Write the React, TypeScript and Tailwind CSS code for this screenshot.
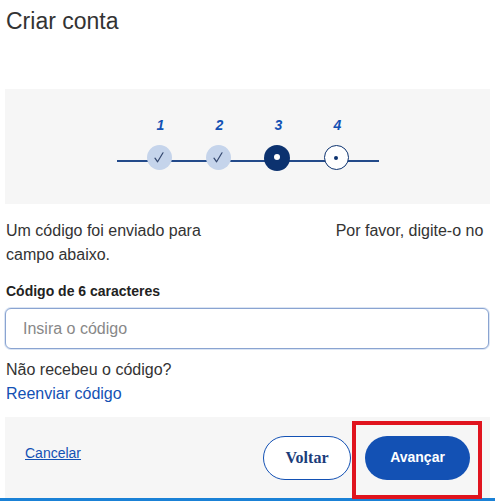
const steps = [
  { n: "1", state: "done" },
  { n: "2", state: "done" },
  { n: "3", state: "current" },
  { n: "4", state: "next" },
]

const Check = () => (
  <svg width="10" height="11" viewBox="0 0 10 11" fill="none">
    <path d="M1 6.2 L3.6 9.8 L9 0.8" stroke="#33476e" strokeWidth="1.2" strokeLinecap="round" strokeLinejoin="round" />
  </svg>
)

const StepCircle = ({ state }: { state: string }) => {
  if (state === "done") {
    return (
      <div className="w-[25px] h-[25px] rounded-full bg-[#c5d4eb] flex items-center justify-center">
        <Check />
      </div>
    )
  }
  if (state === "current") {
    return (
      <div className="w-[26px] h-[26px] rounded-full bg-[#0c326f] flex items-center justify-center">
        <div className="w-[6px] h-[6px] rounded-full bg-white -mt-[2px]" />
      </div>
    )
  }
  return (
    <div className="w-[25px] h-[25px] rounded-full bg-white border border-[#0c326f] flex items-center justify-center">
      <div className="w-[4px] h-[4px] rounded-full bg-[#0c326f]" />
    </div>
  )
}

export default function App() {
  return (
    <div className="w-[495px] h-[501px] bg-white text-[#333] font-['Liberation_Sans',Arial,sans-serif] overflow-hidden">
      <h1 className="pt-[7px] pl-[6px] text-[23px] leading-[28px] font-normal text-[#333]">Criar conta</h1>

      <div className="mt-[54px] mx-[5px] bg-[#f6f6f6] pt-[26px] pb-[33px]">
        <div className="relative w-[262px] mx-auto px-[13px]">
          <div className="absolute left-0 right-0 top-[45px] h-[2px] bg-[#234a8a]" />
          <div className="relative flex">
            {steps.map((s) => (
              <div key={s.n} className="w-[59px] flex flex-col items-center gap-[10px]">
                <span className="text-[14px] leading-[20px] font-bold italic text-[#1351b4] pl-[3px]">{s.n}</span>
                <StepCircle state={s.state} />
              </div>
            ))}
          </div>
        </div>
      </div>

      <div className="px-[6px] pt-[15px]">
        <p className="text-[16px] leading-[24px] pr-[4px]">
          Um código foi enviado para <span className="inline-block w-[126px]" /> Por favor, digite-o no campo abaixo.
        </p>
        <label className="block mt-[15px] text-[14px] leading-[18px] font-bold text-[#222]">Código de 6 caracteres</label>
      </div>

      <div className="mx-[5px] mt-[8px]">
        <input
          placeholder="Insira o código"
          className="w-[484px] h-[41px] rounded-[6px] border border-[#8aa4d1] shadow-[0_0_0_1px_#dbe5f4] pl-[17px] text-[16px] placeholder:text-[#888] outline-none bg-white"
        />
      </div>

      <div className="px-[6px] pt-[9px] text-[16px] leading-[24px]">
        <p>Não recebeu o código?</p>
        <a className="text-[#1351b4]">Reenviar código</a>
      </div>

      <div className="relative mt-[11px]">
        <div className="mx-[5px] w-[485px] h-[81px] bg-[#f6f6f6] flex items-center pl-[20px] pr-[20px]">
          <a className="text-[14px] text-[#1351b4] underline -mt-[8px]">Cancelar</a>
          <div className="ml-auto flex items-center gap-[14px]">
            <button className="w-[88px] h-[44px] rounded-full border border-[#1351b4] bg-white font-['Liberation_Serif',serif] font-bold text-[16px] text-[#1b3d7a]">
              Voltar
            </button>
            <button className="w-[105px] h-[44px] rounded-full bg-[#1351b4] text-white font-bold text-[14px]">
              Avançar
            </button>
          </div>
        </div>
        <div className="h-[4px] bg-[#1a81d6]" />
        <div className="absolute left-[352px] top-[4px] w-[130px] h-[78px] border-4 border-[#e0141e]" />
      </div>
    </div>
  )
}
